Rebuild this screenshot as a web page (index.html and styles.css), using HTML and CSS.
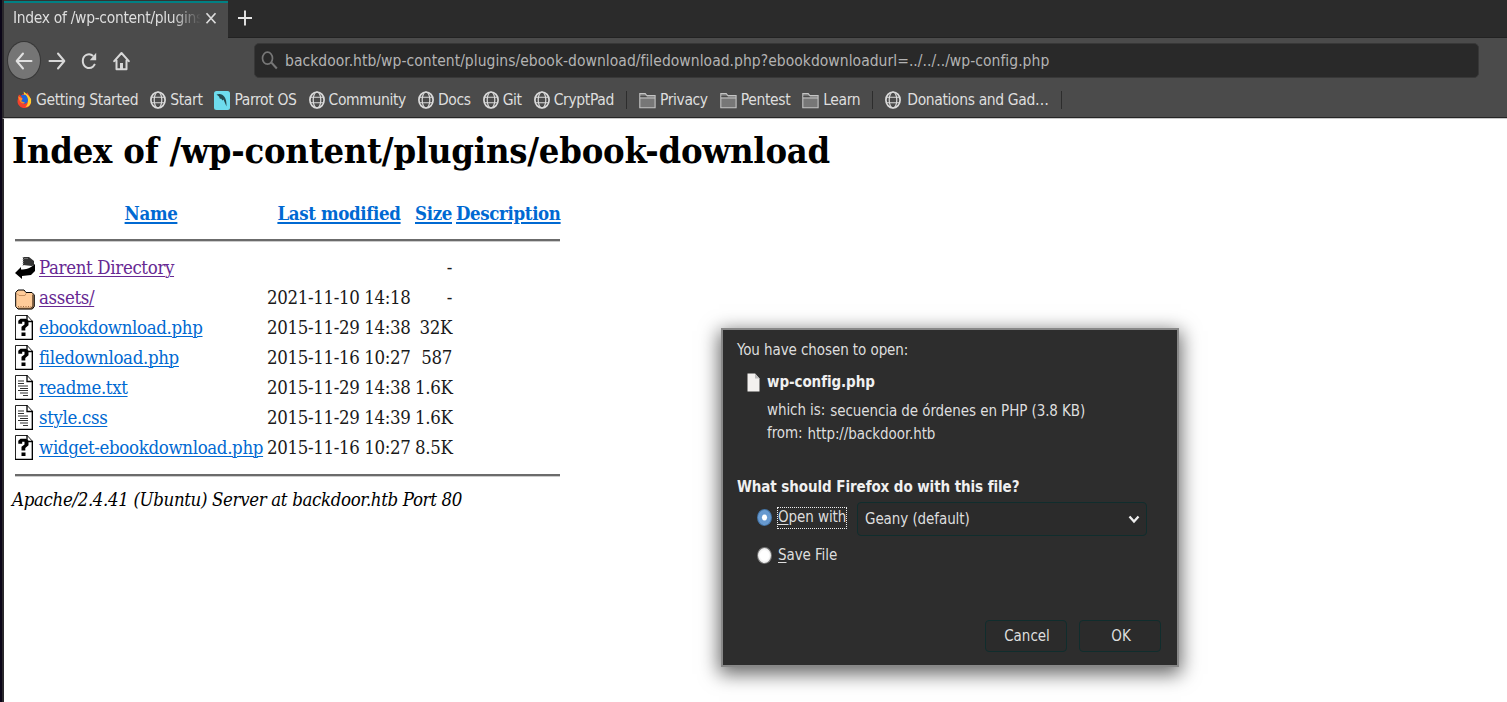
FILE: index.html
```html
<!DOCTYPE html>
<html lang="en">
<head>
<meta charset="utf-8">
<title>Index of /wp-content/plugins/ebook-download</title>
<link rel="stylesheet" href="styles.css">
</head>
<body>
<svg class="defs" width="0" height="0">
  <symbol id="globe" viewBox="0 0 16 18"><g fill="none" stroke="#dadada" stroke-width="1.2"><ellipse cx="8" cy="9" rx="7.1" ry="8" stroke-width="1.7"/><ellipse cx="8" cy="9" rx="3.8" ry="8"/><path d="M1 6.2h14M1 11.8h14" stroke-width="1.1"/></g></symbol>
  <symbol id="folder" viewBox="0 0 17 17"><path d="M.8 15.7V1.6h5.4l1.6 2h8.3v12.1z" fill="#777" stroke="#c4c4c4" stroke-width="1.1"/><path d="M1.4 3.9h6.3v1.5H1.4z" fill="#4b4b4b"/><path d="M1 6h15" stroke="#c4c4c4"/></symbol>
  <symbol id="unknown" viewBox="0 0 20 26"><path d="M.5.5h11.7l5.3 5.8v18.2H.5z" fill="#fff" stroke="#222"/><path d="M12 0v6.5h6M17.3 6v18.5M0 24.3h18" fill="none" stroke="#000" stroke-width="1.3"/><path d="M3.300 8.800V5.800L5.500 3.800h5.500L13.500 5.800v4.400l-3.200 2.700v2.500H6.500v-3.600L9.500 9.500V6.800H7.200v2zM6.500 17.500h4v3.500h-4z" fill="#000"/></symbol>
  <symbol id="textdoc" viewBox="0 0 20 26"><path d="M.5.5h11.7l5.3 5.800v18.200H.5z" fill="#fff" stroke="#222"/><path d="M12 0v6.500h6M17.300 6v18.500M0 24.300h18" fill="none" stroke="#000" stroke-width="1.300"/><path d="M3 6h6M3 8.500h6M3 11h10M5 13.500h8M3 15.500h10M5 18h8M8 20.500h5" stroke="#333" stroke-width="1.100"/></symbol>
</svg>
<div class="window">
  <header class="chrome">
    <div class="tabs">
      <div class="tab"><span class="tab-title">Index of /wp-content/plugins</span><svg width="12" height="14" viewBox="0 0 12 14"><path d="M1.500 2.300l9 10M10.500 2.300l-9 10" stroke="#dcdcdc" stroke-width="1.700"/></svg></div>
      <svg class="plus" width="16" height="18" viewBox="0 0 16 18"><path d="M8 1.500v15M1 9h14" stroke="#e6e6e6" stroke-width="1.900"/></svg>
    </div>
    <nav class="toolbar">
      <span class="back"><svg width="18" height="18" viewBox="0 0 18 18"><path d="M16.500 9H2M8 1.500L1.700 9 8 16.500" fill="none" stroke="#e0e0e0" stroke-width="2" stroke-linecap="round" stroke-linejoin="round"/></svg></span>
      <svg class="forward" width="18" height="18" viewBox="0 0 18 18"><path d="M1.500 9H16M10 1.500L16.300 9 10 16.500" fill="none" stroke="#d8d8d8" stroke-width="2" stroke-linecap="round" stroke-linejoin="round"/></svg>
      <svg class="reload" width="17" height="18" viewBox="0 0 17 18"><path d="M12.200 4C8 .2 1.800 3 1.800 9s6 9 10.400 5.400L14 12" fill="none" stroke="#d8d8d8" stroke-width="2"/><path d="M15.200.8v7.400H8.800z" fill="#d8d8d8"/></svg>
      <svg class="home" width="17" height="20" viewBox="0 0 17 20"><path d="M1.200 10.200L8.500 2l7.300 8.200M3.500 9.500v8.700h10V9.500" fill="none" stroke="#d8d8d8" stroke-width="2" stroke-linecap="round" stroke-linejoin="round"/><path d="M7 12h3v6H7z" fill="#d8d8d8"/></svg>
      <div class="url"><svg width="18" height="19" viewBox="0 0 18 19"><ellipse cx="6.500" cy="7.200" rx="5" ry="6" fill="none" stroke="#777" stroke-width="1.700"/><path d="M10.300 11.500l5.500 6" stroke="#777" stroke-width="2"/></svg><span>backdoor.htb/wp-content/plugins/ebook-download/filedownload.php?ebookdownloadurl=../../../wp-config.php</span></div>
    </nav>
    <nav class="bookmarks">
      <span class="bm"><svg width="15" height="18" viewBox="0 0 16 18"><path d="M2 3l2 1.500L7 2l1 3 3-4 3 5 1 4c0 5-3 7.500-7 7.500S.500 14.500.500 10z" fill="#f4402c"/><path d="M7 0l5 4 3 4v4c-1 3-3 4.500-6 4.500C13 13 12 7 8 5z" fill="#ffcf2f"/><path d="M4 4l5-.5c4 3.500 3.500 9-.5 9.500-3 .2-5-2-5.500-4l3-.5z" fill="#1d62d8"/><path d="M1 5l5 2.500-1.500 2.700 4 1.500C7 14 3.500 12.500 2.500 9z" fill="#ff8b24"/></svg>Getting Started</span>
      <span class="bm"><svg width="16" height="18"><use href="#globe"/></svg>Start</span>
      <span class="bm"><svg width="16" height="19" viewBox="0 0 16 19"><rect width="16" height="19" rx="2.500" fill="#6edced"/><path d="M2.500 3.500c5-2 10.500 1 10 12L11 12 9.500 8.500l-1 1-1.500-2-1 .5-1-2.500z" fill="#25494e"/></svg>Parrot OS</span>
      <span class="bm"><svg width="16" height="18"><use href="#globe"/></svg>Community</span>
      <span class="bm"><svg width="16" height="18"><use href="#globe"/></svg>Docs</span>
      <span class="bm"><svg width="16" height="18"><use href="#globe"/></svg>Git</span>
      <span class="bm"><svg width="16" height="18"><use href="#globe"/></svg>CryptPad</span>
      <i class="sep"></i>
      <span class="bm"><svg width="17" height="17"><use href="#folder"/></svg>Privacy</span>
      <span class="bm"><svg width="17" height="17"><use href="#folder"/></svg>Pentest</span>
      <span class="bm"><svg width="17" height="17"><use href="#folder"/></svg>Learn</span>
      <i class="sep"></i>
      <span class="bm wide"><svg width="16" height="18"><use href="#globe"/></svg>Donations and Gad…</span>
      <i class="sep"></i>
    </nav>
  </header>
  <main class="page">
    <h1>Index of /wp-content/plugins/ebook-download</h1>
    <div class="listing">
      <div class="row head"><i></i><b><a>Name</a></b><b><a>Last modified</a></b><b><a>Size</a></b><b><a>Description</a></b></div>
      <hr>
      <div class="row"><svg width="20" height="26" viewBox="0 0 20 26"><path d="M8 2h6l5 4v4l-2 1-9-1z" fill="#333"/><path d="M8 2v9M10 3v2M12 3v2" stroke="#aaa" stroke-dasharray="1 1"/><path d="M20 9v7l-4 4-9 1v3l-7-6 6-6v2.500c5 0 9-1 14-5.500z" fill="#000"/></svg><a class="visited">Parent Directory</a><span></span><span class="size">-</span></div>
      <div class="row"><svg width="20" height="26" viewBox="0 0 20 26"><path d="M.700 7.500L3 5h6l2 2.500h6L19.300 10v11.500l-2 2.500H3L.700 21.500z" fill="#ffcc99" stroke="#000"/><path d="M18 9.500v12l-2 2H3" stroke="#5d432b" stroke-width="1.500" fill="none"/><path d="M2 8.500l2 2h6l1-2" fill="none" stroke="#c48e5e"/><path d="M3 21.500h13" stroke="#a26d43" stroke-dasharray="1 1.500"/></svg><a class="visited">assets/</a><span>2021-11-10 14:18</span><span class="size">-</span></div>
      <div class="row"><svg width="20" height="26"><use href="#unknown"/></svg><a>ebookdownload.php</a><span>2015-11-29 14:38</span><span class="size">32K</span></div>
      <div class="row"><svg width="20" height="26"><use href="#unknown"/></svg><a>filedownload.php</a><span>2015-11-16 10:27</span><span class="size">587</span></div>
      <div class="row"><svg width="20" height="26"><use href="#textdoc"/></svg><a>readme.txt</a><span>2015-11-29 14:38</span><span class="size">1.6K</span></div>
      <div class="row"><svg width="20" height="26"><use href="#textdoc"/></svg><a>style.css</a><span>2015-11-29 14:39</span><span class="size">1.6K</span></div>
      <div class="row"><svg width="20" height="26"><use href="#unknown"/></svg><a>widget-ebookdownload.php</a><span>2015-11-16 10:27</span><span class="size">8.5K</span></div>
      <hr class="end">
    </div>
    <address>Apache/2.4.41 (Ubuntu) Server at backdoor.htb Port 80</address>
  </main>
</div>
<section class="dialog">
  <p class="intro">You have chosen to open:</p>
  <div class="file"><svg width="13" height="19" viewBox="0 0 13 19"><path d="M.500.500H8l4.500 5v13H.500z" fill="#f3f1ef"/><path d="M8 .500v5h4.500z" fill="#bbb"/></svg><b>wp-config.php</b></div>
  <div class="detail which"><span>which is:</span><span class="value">secuencia de órdenes en PHP (3.8 KB)</span></div>
  <div class="detail from"><span>from:</span><span class="value">http://backdoor.htb</span></div>
  <p class="question">What should Firefox do with this file?</p>
  <div class="option open"><i class="radio checked"></i><span class="focus"><u>O</u>pen with</span><div class="select"><span>Geany (default)</span><svg width="12" height="9" viewBox="0 0 12 9"><path d="M1.500 1.500L6 6.500l4.500-5" fill="none" stroke="#eee" stroke-width="2.300"/></svg></div></div>
  <div class="option save"><i class="radio"></i><span><u>S</u>ave File</span></div>
  <div class="actions"><button>Cancel</button><button>OK</button></div>
</section>
</body>
</html>
```
FILE: styles.css
```css
* { box-sizing: border-box; }
body { margin: 0; width: 1507px; height: 702px; overflow: hidden; background: #fff; font: 16px/20px "DejaVu Sans Condensed", "DejaVu Sans", sans-serif; font-stretch: condensed; }
svg { display: block; flex: none; }
.defs { position: absolute; }
.window { height: 702px; border-left: 2px solid #0b0618; }
.chrome { height: 119px; border-left: 2px solid #29272b; background: #4b4b4b; border-bottom: 1px solid #c8c8c8; box-shadow: inset 0 -1px #252525; color: #dedede; font-size: 15.5px; }
.tabs { display: flex; height: 38px; background: #2b2b2b; box-shadow: inset 0 -1px #222; }
.tab { width: 224px; display: flex; align-items: center; padding: 0 0 3px 9px; background: #4b4b4b; border-top: 1px solid #333; box-shadow: inset 0 2px #008184; }
.tab-title { width: 192px; overflow: hidden; white-space: nowrap; letter-spacing: -.33px; -webkit-mask-image: linear-gradient(90deg, #000 160px, transparent 188px); mask-image: linear-gradient(90deg, #000 160px, transparent 188px); }
.plus { margin: 9px 0 0 9px; }
.toolbar { display: flex; height: 45px; align-items: center; padding-left: 4px; }
.back { display: grid; place-items: center; width: 32px; height: 37px; border-radius: 50%; background: #757575; box-shadow: 0 0 0 1px #373737; }
.forward { margin-left: 8px; }
.reload { margin-left: 15px; }
.home { margin-left: 15px; }
.url { display: flex; align-items: center; width: 1225px; height: 35px; margin-left: 124px; padding-left: 6px; border-radius: 5px; background: #292929; border: 1px solid #383838; color: #b3b3b3; }
.url span { margin-left: 6px; white-space: nowrap; letter-spacing: .035px; }
.bookmarks { display: flex; height: 34px; align-items: center; gap: 12px; padding-left: 13px; letter-spacing: -.37px; }
.bm { display: flex; align-items: center; gap: 4px; white-space: nowrap; }
.wide { gap: 6px; }
.sep { width: 1px; height: 18px; background: #2d2d2d; }
.page { height: 583px; padding: 11px 0 0 8px; border-left: 2px solid #29272b; color: #1a1a1a; font: 18.5px/30px "DejaVu Serif Condensed", "DejaVu Serif", serif; font-stretch: condensed; letter-spacing: -.35px; }
h1 { margin: 0; height: 40px; color: #000; font-size: 36px; line-height: 40px; letter-spacing: -.21px; white-space: nowrap; }
.listing { width: 545px; margin: 29px 0 0 3px; }
.row { display: grid; grid-template-columns: 20px 224px 144px 37px 104px; column-gap: 4px; height: 30px; align-items: center; white-space: nowrap; }
.row a { color: #0069d2; text-decoration: underline; text-underline-offset: 2px; text-decoration-thickness: 1px; }
.row a.visited { color: #672993; }
.row .size { text-align: right; }
.head { text-align: center; }
.head b a { text-decoration-thickness: 2px; }
hr { height: 3px; margin: 10px 0 11px; border: 0; border-top: 2px solid #6b6b6b; border-bottom: 1px solid #ccc; }
hr.end { margin: 11px 0 8px; }
address { color: #000; white-space: nowrap; }
.dialog { position: absolute; left: 721px; top: 328px; width: 458px; height: 339px; padding: 10px 14px; border: 2px solid #888; background: #2d2d2d; box-shadow: 0 5px 18px 2px rgba(0,0,0,.6); color: #dedede; font-size: 15px; letter-spacing: -.08px; white-space: nowrap; }
.dialog p { margin: 0; height: 20px; }
.file { display: flex; align-items: center; height: 20px; margin: 12px 0 0 10px; gap: 7px; }
.file b, .question { color: #f0f0f0; }
.detail { display: flex; height: 20px; margin-left: 30px; gap: 5px; }
.which { margin-top: 8px; }
.from { margin-top: 3px; }
.value { padding-top: 1px; }
.dialog .question { margin-top: 34px; font-weight: bold; }
.option { display: flex; align-items: center; margin-left: 20px; }
.open { height: 34px; margin-top: 5px; }
.open .radio, .focus { margin-bottom: 3px; }
.save { height: 20px; margin-top: 9px; }
.radio { width: 15px; height: 17px; margin-right: 5px; border-radius: 50%; border: 1px solid #777; background: radial-gradient(#fff 45%, #ccc); }
.checked { border-color: #4577aa; background: radial-gradient(#fff 22%, #6699cf 34%, #6b9bd0); }
.focus { width: 70px; height: 22px; line-height: 19px; border: 1px dotted #eee; }
.save span { margin-left: 1px; }
u { text-underline-offset: 2px; }
.select { display: flex; align-items: center; justify-content: space-between; width: 290px; height: 34px; margin-left: 10px; padding: 0 6px 0 7px; border: 1px solid #102d2d; border-radius: 4px; background: #2b2b2b; }
.actions { display: flex; justify-content: flex-end; gap: 12px; margin: 55px 2px 0 0; }
button { width: 82px; height: 32px; padding: 0 0 0 2px; border: 1px solid #102d2d; border-radius: 4px; background: #2b2b2b; color: inherit; font: inherit; }
```
